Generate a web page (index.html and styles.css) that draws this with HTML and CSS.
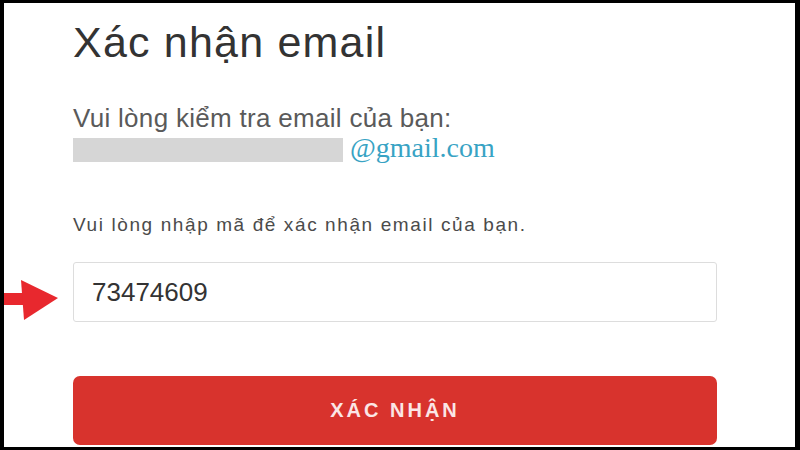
FILE: index.html
```html
<!DOCTYPE html>
<html lang="vi">
<head>
    <meta charset="UTF-8">
    <meta name="viewport" content="width=device-width, initial-scale=1.0">
    <title>Xác nhận email</title>
    <link rel="stylesheet" href="styles.css">
</head>
<body>
    <section class="card">
        <h1 class="title">Xác nhận email</h1>
        <p class="check">Vui lòng kiểm tra email của bạn:</p>
        <div class="mail-row">
            <span class="hidden-part"></span>
            <span class="mail">@gmail.com</span>
        </div>
        <p class="hint">Vui lòng nhập mã để xác nhận email của bạn.</p>
        <div class="code-wrap">
            <svg class="arrow" width="60" height="44" viewBox="0 0 60 44">
                <rect x="0" y="15" width="26" height="12" fill="#e8282e"/>
                <polygon points="21,2 58,20 24,42" fill="#e8282e"/>
            </svg>
            <input class="code" type="text" value="73474609">
        </div>
        <button type="button" class="confirm">XÁC NHẬN</button>
    </section>
</body>
</html>
```

FILE: styles.css
```css
*{
    margin: 0;
    padding: 0;
    box-sizing: border-box;
}
body{
    background-color: #000;
    font-family: "Liberation Sans", Arial, sans-serif;
}
.card{
    background-color: #fff;
    margin: 3px 5px 3px 4px;
    height: 444px;
    padding: 14px 0 0 69px;
    overflow: hidden;
}
.title{
    font-weight: normal;
    font-size: 43px;
    letter-spacing: 1.2px;
    line-height: 50px;
    color: #333;
}
.check{
    margin-top: 36px;
    font-size: 26px;
    letter-spacing: 0.3px;
    line-height: 30px;
    color: #5a5a5a;
}
.mail-row{
    display: flex;
    height: 30px;
}
.hidden-part{
    width: 270px;
    height: 24px;
    margin-top: 5px;
    background-color: #d6d6d6;
}
.mail{
    margin-left: 7px;
    font-family: "Liberation Serif", "Times New Roman", serif;
    font-size: 28px;
    line-height: 30px;
    color: #38a3c4;
}
.hint{
    margin-top: 51px;
    font-size: 19px;
    letter-spacing: 1.6px;
    line-height: 22px;
    color: #4b4b4b;
}
.code-wrap{
    position: relative;
    width: 644px;
    margin-top: 26px;
}
.arrow{
    position: absolute;
    left: -73px;
    top: 16px;
}
.code{
    display: block;
    width: 644px;
    height: 60px;
    border: 1px solid #ddd;
    border-radius: 3px;
    padding-left: 18px;
    font-family: "Liberation Sans", Arial, sans-serif;
    font-size: 26px;
    color: #333;
    outline: none;
}
.confirm{
    display: block;
    width: 644px;
    height: 69px;
    margin-top: 54px;
    border: none;
    border-radius: 7px;
    background-color: #d8332d;
    color: #fbe6e6;
    font-family: "Liberation Sans", Arial, sans-serif;
    font-weight: bold;
    font-size: 20px;
    letter-spacing: 3px;
}
```
